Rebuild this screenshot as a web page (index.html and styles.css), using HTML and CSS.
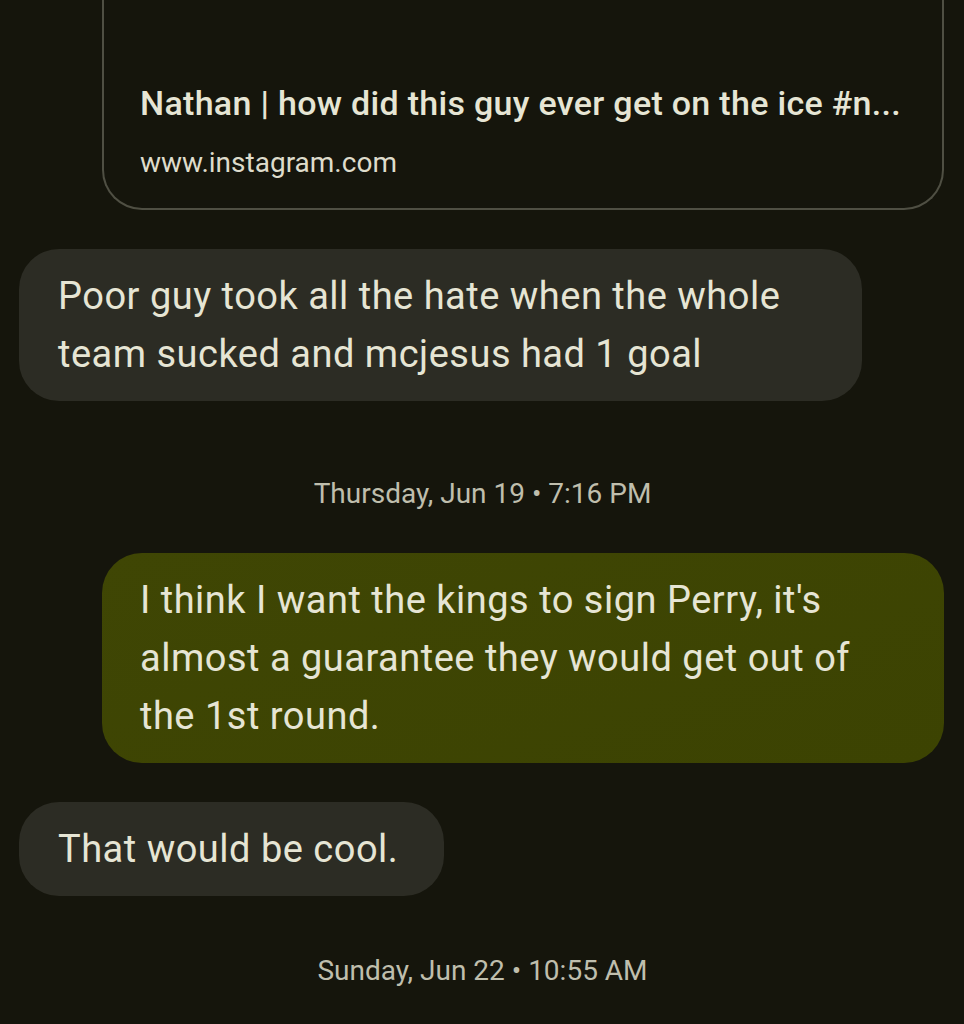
FILE: index.html
```html
<!DOCTYPE html>
<html lang="en">
<head>
    <meta charset="UTF-8">
    <meta name="viewport" content="width=device-width, initial-scale=1.0">
    <title>Messages</title>
    <link rel="stylesheet" href="styles.css">
</head>
<body>
    <div class="thread">
        <div class="row out">
            <div class="link-card">
                <div class="link-preview"></div>
                <div class="link-title">Nathan | how did this guy ever get on the ice #n...</div>
                <div class="link-url">www.instagram.com</div>
            </div>
        </div>

        <div class="row in">
            <div class="bubble">Poor guy took all the hate when the whole team sucked and mcjesus had 1 goal</div>
        </div>

        <div class="stamp first">Thursday, Jun 19 • 7:16 PM</div>

        <div class="row out">
            <div class="bubble">I think I want the kings to sign Perry, it's almost a guarantee they would get out of the 1st round.</div>
        </div>

        <div class="row in">
            <div class="bubble">That would be cool.</div>
        </div>

        <div class="stamp">Sunday, Jun 22 • 10:55 AM</div>
    </div>
</body>
</html>
```

FILE: styles.css
```css
html, body {
    margin: 0;
    height: 100%;
    background-color: #15150c;
}
body {
    font-family: Roboto, "Noto Sans", sans-serif;
    color: #e6e5d4;
    overflow: hidden;
}
.thread {
    display: flex;
    flex-direction: column;
    padding: 0 20px 0 19px;
}
.row {
    display: flex;
    margin-top: 39px;
}
.row.in {
    justify-content: flex-start;
}
.row.out {
    justify-content: flex-end;
}
.row:first-child {
    margin-top: -60px;
}
.bubble {
    max-width: 843px;
    box-sizing: border-box;
    padding: 18px 46px 18px 39px;
    border-radius: 40px;
    font-size: 38px;
    line-height: 58px;
    letter-spacing: 0.5px;
    background-color: #2c2c24;
}
.row.out .bubble {
    width: 842px;
    padding: 18px 46px 18px 38px;
    background: linear-gradient(160deg, #3f4604, #3c4302);
}
.link-card {
    width: 842px;
    box-sizing: border-box;
    border: 2px solid #4f4f43;
    border-top: none;
    border-radius: 0 0 40px 40px;
    padding: 0 30px 28px 36px;
}
.link-preview {
    height: 143px;
}
.link-title {
    font-size: 34px;
    font-weight: 500;
    line-height: 40px;
    letter-spacing: 0.3px;
    white-space: nowrap;
}
.link-url {
    margin-top: 23px;
    font-size: 28px;
    line-height: 34px;
    color: #dedccb;
}
.stamp {
    text-align: center;
    font-size: 28px;
    line-height: 40px;
    color: #bfbead;
    margin-top: 55px;
    padding-left: 2px;
}
.stamp.first {
    margin-top: 73px;
}
```
